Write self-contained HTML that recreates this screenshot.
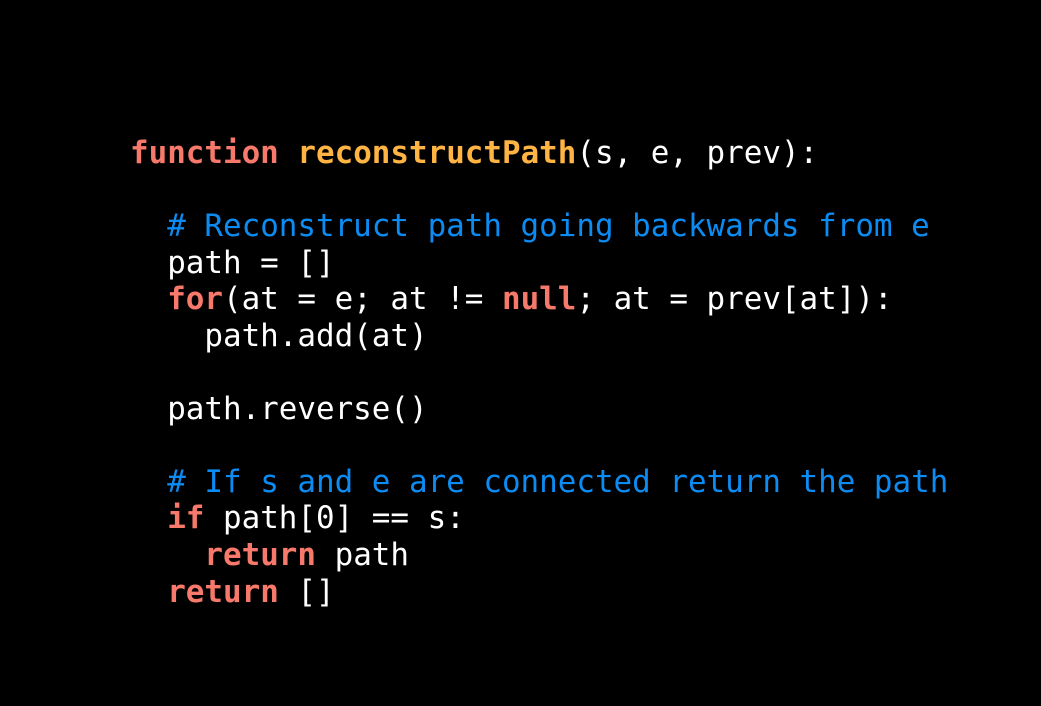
<!DOCTYPE html>
<html><head><meta charset="utf-8"><style>
html,body{margin:0;padding:0;background:#000;width:1041px;height:706px;overflow:hidden}
pre{position:absolute;left:130px;top:135px;margin:0;font-family:"DejaVu Sans Mono","Liberation Mono",monospace;font-size:30.9px;line-height:36.55px;color:#fff}
.k{color:#f7796c;font-weight:bold}
.f{color:#ffb443;font-weight:bold}
.c{color:#0c8cf2}
</style></head><body>
<pre><span class="k">function</span> <span class="f">reconstructPath</span>(s, e, prev):

  <span class="c"># Reconstruct path going backwards from e</span>
  path = []
  <span class="k">for</span>(at = e; at != <span class="k">null</span>; at = prev[at]):
    path.add(at)

  path.reverse()

  <span class="c"># If s and e are connected return the path</span>
  <span class="k">if</span> path[0] == s:
    <span class="k">return</span> path
  <span class="k">return</span> []</pre>
</body></html>
